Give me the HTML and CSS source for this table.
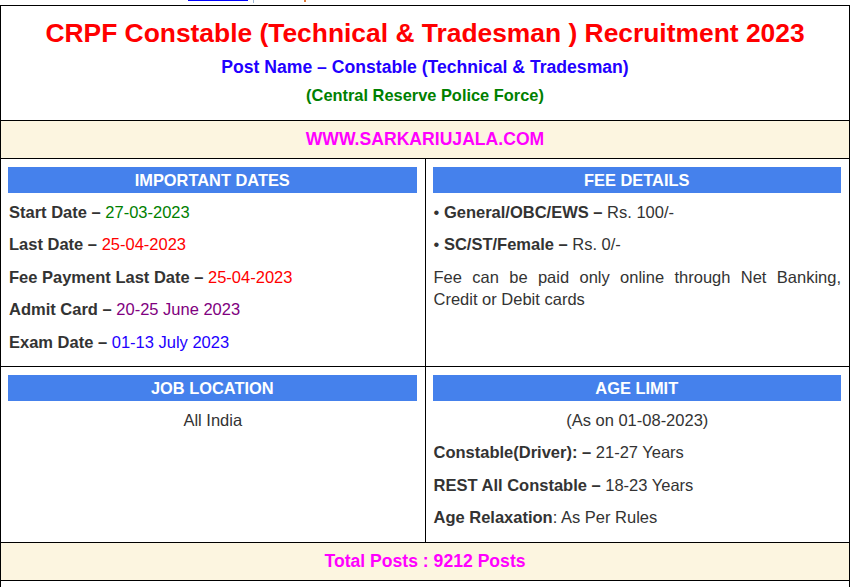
FILE: index.html
```html
<!DOCTYPE html>
<html>
<head>
<meta charset="utf-8">
<link rel="stylesheet" href="styles.css">
</head>
<body>
<div class="peek" aria-hidden="true"><span class="peek-link"></span><span class="peek-sep"></span><span class="peek-orange"></span></div>
<table class="info">
  <tr>
    <td colspan="2" class="head-cell">
      <h1 class="title">CRPF Constable (Technical &amp; Tradesman ) Recruitment 2023</h1>
      <h2 class="post">Post Name – Constable (Technical &amp; Tradesman)</h2>
      <h3 class="org">(Central Reserve Police Force)</h3>
    </td>
  </tr>
  <tr>
    <td colspan="2" class="band">WWW.SARKARIUJALA.COM</td>
  </tr>
  <tr>
    <td class="box">
      <div class="bar">IMPORTANT DATES</div>
      <p><b>Start Date –</b> <span class="green">27-03-2023</span></p>
      <p><b>Last Date –</b> <span class="red">25-04-2023</span></p>
      <p><b>Fee Payment Last Date –</b> <span class="red">25-04-2023</span></p>
      <p><b>Admit Card –</b> <span class="purple">20-25 June 2023</span></p>
      <p><b>Exam Date –</b> <span class="violet">01-13 July 2023</span></p>
    </td>
    <td class="box">
      <div class="bar">FEE DETAILS</div>
      <p>• <b>General/OBC/EWS –</b> Rs. 100/-</p>
      <p>• <b>SC/ST/Female –</b> Rs. 0/-</p>
      <p class="justify">Fee can be paid only online through Net Banking, Credit or Debit cards</p>
    </td>
  </tr>
  <tr>
    <td class="box">
      <div class="bar">JOB LOCATION</div>
      <p class="center">All India</p>
    </td>
    <td class="box">
      <div class="bar">AGE LIMIT</div>
      <p class="center">(As on 01-08-2023)</p>
      <p><b>Constable(Driver): –</b> 21-27 Years</p>
      <p><b>REST All Constable –</b> 18-23 Years</p>
      <p><b>Age Relaxation</b>: As Per Rules</p>
    </td>
  </tr>
  <tr>
    <td colspan="2" class="band">Total Posts : 9212 Posts</td>
  </tr>
  <tr>
    <td colspan="2" class="tail"></td>
  </tr>
</table>
</body>
</html>
```
FILE: styles.css
```css
html, body {
  margin: 0;
  padding: 0;
  background: #fff;
  font-family: "Liberation Sans", Arial, sans-serif;
  color: #333;
}

.peek {
  height: 5px;
  display: flex;
  align-items: flex-start;
  padding-left: 188px;
}
.peek-link {
  width: 60px;
  height: 1px;
  background: #0000ff;
}
.peek-sep {
  width: 1px;
  height: 3px;
  margin-left: 5px;
  background: #9fb8d4;
}
.peek-orange {
  width: 2px;
  height: 2px;
  margin-left: 50px;
  background: #e07b39;
}

.info {
  width: 850px;
  border-collapse: collapse;
  table-layout: fixed;
}
.info td {
  border: 1px solid #000;
  vertical-align: top;
}

.head-cell {
  text-align: center;
  padding: 10px 7px 15px;
}
.title {
  margin: 0;
  color: #ff0000;
  font-size: 26.4px;
  line-height: 34px;
  font-weight: bold;
}
.post {
  margin: 6px 0 0;
  color: #2200ff;
  font-size: 17.6px;
  line-height: 22px;
  font-weight: bold;
}
.org {
  margin: 7px 0 0;
  color: #008000;
  font-size: 16.4px;
  line-height: 20px;
  font-weight: bold;
}

.band {
  background: #fcf5e0;
  text-align: center;
  color: #ff00ff;
  font-weight: bold;
  font-size: 17.6px;
  line-height: 21px;
  padding: 8px 7px 8px;
  vertical-align: middle;
}

.box {
  width: 50%;
  padding: 8px 8px 3px 7px;
  font-size: 16.5px;
}
.bar {
  background: #4581ec;
  color: #fff;
  font-weight: bold;
  font-size: 16.4px;
  line-height: 26px;
  text-align: center;
  margin-bottom: 8px;
}
.box p {
  margin: 0 0 10px;
  line-height: 22.4px;
  padding-left: 1px;
}
.box b { color: #333; }
.center { text-align: center; }
.justify { text-align: justify; }

.green { color: #008000; }
.red { color: #ff0000; }
.purple { color: #800080; }
.violet { color: #2200ff; }

.tail {
  height: 8px;
  padding: 0;
}
```
